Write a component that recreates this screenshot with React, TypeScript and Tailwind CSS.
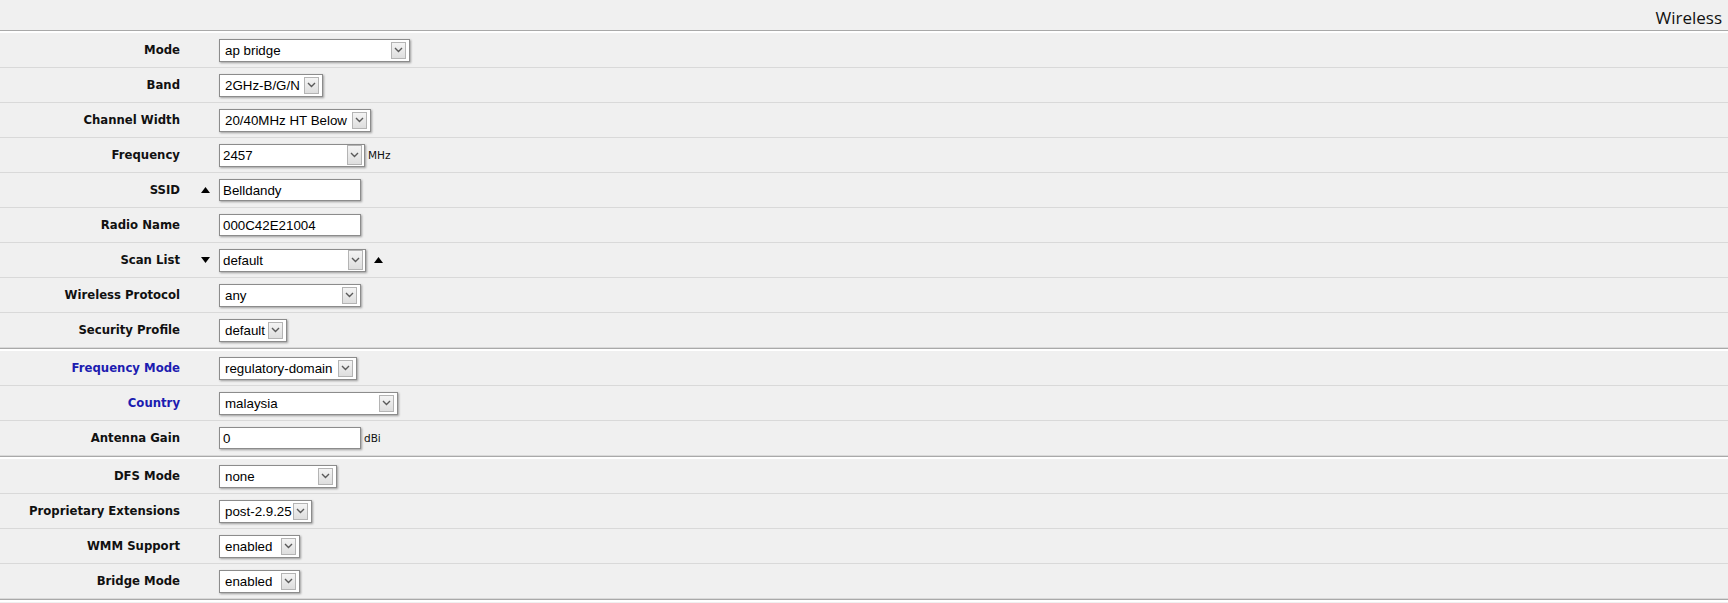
import React from "react";

type Row =
  | { kind: "sep" }
  | {
      kind: "field";
      label: string;
      type: "select" | "combo" | "input";
      value: string;
      w: string;
      blue?: boolean;
      unit?: string;
      pre?: "up" | "down";
      post?: "up" | "down";
    };

const rows: Row[] = [
  { kind: "field", label: "Mode", type: "select", value: "ap bridge", w: "w-[191px]" },
  { kind: "field", label: "Band", type: "select", value: "2GHz-B/G/N", w: "w-[104px]" },
  { kind: "field", label: "Channel Width", type: "select", value: "20/40MHz HT Below", w: "w-[152px]" },
  { kind: "field", label: "Frequency", type: "combo", value: "2457", w: "w-[146px]", unit: "MHz" },
  { kind: "field", label: "SSID", type: "input", value: "Belldandy", w: "w-[142px]", pre: "up" },
  { kind: "field", label: "Radio Name", type: "input", value: "000C42E21004", w: "w-[142px]" },
  { kind: "field", label: "Scan List", type: "combo", value: "default", w: "w-[147px]", pre: "down", post: "up" },
  { kind: "field", label: "Wireless Protocol", type: "select", value: "any", w: "w-[142px]" },
  { kind: "field", label: "Security Profile", type: "select", value: "default", w: "w-[68px]" },
  { kind: "sep" },
  { kind: "field", label: "Frequency Mode", type: "select", value: "regulatory-domain", w: "w-[138px]", blue: true },
  { kind: "field", label: "Country", type: "select", value: "malaysia", w: "w-[179px]", blue: true },
  { kind: "field", label: "Antenna Gain", type: "input", value: "0", w: "w-[142px]", unit: "dBi" },
  { kind: "sep" },
  { kind: "field", label: "DFS Mode", type: "select", value: "none", w: "w-[118px]" },
  { kind: "field", label: "Proprietary Extensions", type: "select", value: "post-2.9.25", w: "w-[93px]" },
  { kind: "field", label: "WMM Support", type: "select", value: "enabled", w: "w-[81px]" },
  { kind: "field", label: "Bridge Mode", type: "select", value: "enabled", w: "w-[81px]" },
  { kind: "sep" },
];

function Chevron() {
  return (
    <svg width="9" height="6" viewBox="0 0 9 6" className="block">
      <path d="M1 1 L4.5 4.5 L8 1" fill="none" stroke="#5a5a5a" strokeWidth="1.4" />
    </svg>
  );
}

function ArrowBox({ combo }: { combo?: boolean }) {
  return (
    <div
      className={
        combo
          ? "mr-[2px] flex h-[20px] w-[15px] shrink-0 items-center justify-center self-start border border-[#b4b4b4] bg-gradient-to-b from-[#f4f4f4] to-[#dedede]"
          : "mr-[3px] flex h-[17px] w-[15px] shrink-0 items-center justify-center border border-[#b4b4b4] bg-gradient-to-b from-[#f4f4f4] to-[#dedede]"
      }
    >
      <Chevron />
    </div>
  );
}

function Triangle({ dir }: { dir: "up" | "down" }) {
  return (
    <svg width="9" height="6" viewBox="0 0 9 6" className="block">
      {dir === "up" ? <path d="M0 6 L4.5 0 L9 6 Z" fill="#000" /> : <path d="M0 0 L9 0 L4.5 6 Z" fill="#000" />}
    </svg>
  );
}

function Control({ row }: { row: Extract<Row, { kind: "field" }> }) {
  const font = "[font-family:'Liberation_Sans',Arial,sans-serif] text-[13.33px] text-black";
  if (row.type === "input") {
    return (
      <div
        className={`${row.w} flex h-[22px] items-center border border-[#8c8c8c] bg-white pl-[3px] shadow-[1px_1px_2px_rgba(0,0,0,0.35)] ${font}`}
      >
        <span className="whitespace-nowrap pt-px">{row.value}</span>
      </div>
    );
  }
  const combo = row.type === "combo";
  return (
    <div
      className={`${row.w} flex h-[23px] items-center border border-[#8c8c8c] bg-white shadow-[1px_1px_2px_rgba(0,0,0,0.35)] ${font} ${combo ? "pl-[3px]" : "pl-[5px]"}`}
    >
      <span className="min-w-0 flex-1 overflow-hidden whitespace-nowrap pt-px">{row.value}</span>
      <ArrowBox combo={combo} />
    </div>
  );
}

export default function App() {
  return (
    <div className="min-h-[603px] w-[1728px] bg-[#f0f0f0]">
      <div className="flex h-[30px] justify-end pr-[6px] pt-[9px]">
        <span className="[font-family:'Open_Sans',sans-serif] text-[17px] leading-[17px] text-[#111]">Wireless</span>
      </div>
      <div className="h-[3px] border-t border-[#a9a9a9] bg-white" />
      {rows.map((row, i) =>
        row.kind === "sep" ? (
          <div key={i} className="h-[3px] border-t border-[#a9a9a9] bg-white" />
        ) : (
          <div key={i} className="flex h-[35px] items-center border-b border-[#d9d9d9]">
            <div
              className={`w-[180px] shrink-0 pt-[2px] text-right [font-family:'DejaVu_Sans',Verdana,sans-serif] text-[11.7px] font-bold whitespace-nowrap ${row.blue ? "text-[#1c1cb0]" : "text-[#111]"}`}
            >
              {row.label}
            </div>
            <div className="flex w-[39px] shrink-0 justify-end pr-[9px]">
              {row.pre ? <Triangle dir={row.pre} /> : null}
            </div>
            <Control row={row} />
            {row.unit ? (
              <span className="ml-[3px] pt-px [font-family:'DejaVu_Sans',Verdana,sans-serif] text-[10.5px] text-[#111]">{row.unit}</span>
            ) : null}
            {row.post ? (
              <div className="ml-[8px]">
                <Triangle dir={row.post} />
              </div>
            ) : null}
          </div>
        )
      )}
    </div>
  );
}
